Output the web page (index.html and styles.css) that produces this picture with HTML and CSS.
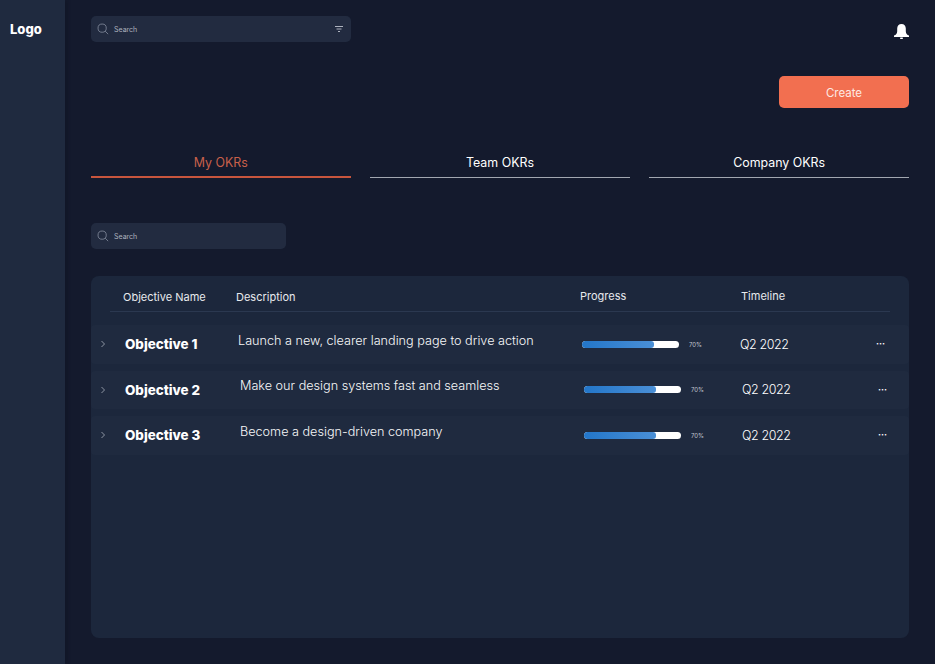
FILE: index.html
```html
<!DOCTYPE html>
<html lang="en">
<head>
    <meta charset="UTF-8">
    <meta name="viewport" content="width=device-width, initial-scale=1.0">
    <title>OKRs</title>
    <link rel="stylesheet" href="styles.css">
</head>
<body>
    <div class="app">
        <aside class="sidebar">
            <div class="logo">Logo</div>
        </aside>

        <main class="main">
            <header class="topbar">
                <div class="search search-wide">
                    <svg class="search-icon" viewBox="0 0 14 14"><circle cx="6" cy="6" r="4.8"/><path d="M9.5 9.5L13 13"/></svg>
                    <span class="search-text">Search</span>
                    <svg class="filter-icon" viewBox="0 0 8 6"><path d="M0 .5h8M1.500 3h5M3 5.500h2"/></svg>
                </div>
                <svg class="bell" viewBox="0 0 15 15"><path d="M7.500 0C4.800 0 3.200 2 3.200 4.600v2.600C3.200 9.300 2 10.700 0 11.600V13h15v-1.400c-2-.9-3.200-2.300-3.200-4.400V4.600C11.800 2 10.200 0 7.500 0z"/><rect x="6" y="13.500" width="3" height="1.500" rx=".7"/></svg>
            </header>

            <div class="actions">
                <button class="create-btn">Create</button>
            </div>

            <nav class="tabs">
                <div class="tab active">My OKRs</div>
                <div class="tab">Team OKRs</div>
                <div class="tab">Company OKRs</div>
            </nav>

            <div class="search search-small">
                <svg class="search-icon" viewBox="0 0 14 14"><circle cx="6" cy="6" r="4.8"/><path d="M9.5 9.5L13 13"/></svg>
                <span class="search-text">Search</span>
            </div>

            <section class="okr-card">
                <div class="okr-head">
                    <div class="head-name">Objective Name</div>
                    <div class="head-desc">Description</div>
                    <div class="head-progress">Progress</div>
                    <div class="head-time">Timeline</div>
                </div>

                <div class="okr-row">
                    <svg class="chevron" viewBox="0 0 6 8"><path d="M1.500 1l3 3-3 3"/></svg>
                    <div class="okr-name">Objective 1</div>
                    <div class="okr-desc">Launch a new, clearer landing page to drive action</div>
                    <div class="okr-progress">
                        <div class="bar"><div class="bar-fill"></div></div>
                        <span class="percent">70%</span>
                    </div>
                    <div class="okr-time">Q2 2022</div>
                    <div class="more">&middot;&middot;&middot;</div>
                </div>

                <div class="okr-row shifted">
                    <svg class="chevron" viewBox="0 0 6 8"><path d="M1.500 1l3 3-3 3"/></svg>
                    <div class="okr-name">Objective 2</div>
                    <div class="okr-desc">Make our design systems fast and seamless</div>
                    <div class="okr-progress">
                        <div class="bar"><div class="bar-fill"></div></div>
                        <span class="percent">70%</span>
                    </div>
                    <div class="okr-time">Q2 2022</div>
                    <div class="more">&middot;&middot;&middot;</div>
                </div>

                <div class="okr-row shifted">
                    <svg class="chevron" viewBox="0 0 6 8"><path d="M1.500 1l3 3-3 3"/></svg>
                    <div class="okr-name">Objective 3</div>
                    <div class="okr-desc">Become a design-driven company</div>
                    <div class="okr-progress">
                        <div class="bar"><div class="bar-fill"></div></div>
                        <span class="percent">70%</span>
                    </div>
                    <div class="okr-time">Q2 2022</div>
                    <div class="more">&middot;&middot;&middot;</div>
                </div>
            </section>
        </main>
    </div>
</body>
</html>
```

FILE: styles.css
```css
:root {
    --bg-dark: #141a2d;
    --panel: #1f2a3f;
    --card: #1c273c;
    --row: #1f2a3f;
    --orange: #f26f50;
    --text-light: #f2f3f5;
}
* {
    box-sizing: border-box;
}
body {
    margin: 0;
    font-family: 'Inter', 'Open Sans', sans-serif;
    background-color: var(--bg-dark);
    color: var(--text-light);
}
.app {
    display: flex;
    height: 664px;
    overflow: hidden;
}
.sidebar {
    width: 65px;
    flex-shrink: 0;
    background-color: var(--panel);
    box-shadow: 3px 0 3px rgba(10, 14, 26, 0.25);
    padding: 20px 0 0 10px;
}
.logo {
    font-size: 13px;
    font-weight: 800;
    line-height: 19px;
    color: #fff;
}
.main {
    flex: 1;
    padding: 16px 26px 26px;
    display: flex;
    flex-direction: column;
}
.topbar {
    display: flex;
    justify-content: space-between;
    align-items: flex-start;
}
.search {
    display: flex;
    align-items: center;
    height: 26px;
    padding: 0 7px 0 6px;
    border-radius: 5px;
    background-color: #222b40;
}
.search-wide {
    width: 260px;
}
.search-small {
    width: 195px;
    margin-top: 45px;
}
.search-icon {
    width: 12px;
    height: 12px;
    fill: none;
    stroke: #7f8899;
    stroke-width: 1;
}
.search-text {
    flex: 1;
    margin-left: 5px;
    font-size: 7px;
    color: #aeb3bf;
}
.filter-icon {
    width: 8px;
    height: 6px;
    margin-right: 1px;
    fill: none;
    stroke: #aeb3bf;
    stroke-width: 1;
}
.bell {
    width: 15px;
    height: 15px;
    margin-top: 8px;
    fill: #fff;
}
.actions {
    display: flex;
    justify-content: flex-end;
    margin-top: 34px;
}
.create-btn {
    width: 130px;
    height: 32px;
    padding-top: 2px;
    border: none;
    border-radius: 5px;
    background-color: var(--orange);
    color: #fde9e3;
    font-family: inherit;
    font-size: 11.500px;
    cursor: pointer;
}
.tabs {
    display: grid;
    grid-template-columns: repeat(3, 1fr);
    gap: 19.500px;
    margin-top: 44px;
}
.tab {
    height: 26px;
    text-align: center;
    font-size: 12.400px;
    font-weight: 400;
    line-height: 21px;
    color: #fff;
    border-bottom: 1px solid #a2a7b0;
}
.tab.active {
    color: #c8604a;
    border-bottom: 2px solid #c8553d;
}
.okr-card {
    flex: 1;
    margin-top: 27px;
    border-radius: 8px;
    background-color: var(--card);
    display: flex;
    flex-direction: column;
    gap: 7px;
}
.okr-head {
    height: 36px;
    margin: 0 19px 6px;
    border-bottom: 1px solid #2b3850;
    font-size: 11px;
    color: #e8eaee;
    display: flex;
    align-items: center;
}
.head-name {
    width: 113px;
    margin-left: 13px;
    padding-top: 6px;
}
.head-desc {
    width: 344px;
    padding-top: 6px;
}
.head-progress {
    width: 161px;
    padding-top: 4px;
}
.head-time {
    padding-top: 4px;
}
.okr-row {
    height: 38.500px;
    display: flex;
    align-items: center;
    background-color: var(--row);
    border-radius: 4px;
}
.chevron {
    width: 6px;
    height: 8px;
    margin-left: 9px;
    fill: none;
    stroke: #8d95a3;
    stroke-width: 1;
}
.okr-name {
    width: 113px;
    margin-left: 19px;
    font-size: 13.400px;
    font-weight: 800;
    color: #fff;
}
.okr-desc {
    width: 344px;
    padding-bottom: 8px;
    font-size: 12.650px;
    font-weight: 300;
    color: #f7f8f9;
}
.okr-progress {
    width: 158px;
    display: flex;
    align-items: center;
}
.bar {
    width: 97px;
    height: 7px;
    border-radius: 4px;
    background-color: #fff;
    overflow: hidden;
}
.bar-fill {
    width: 74%;
    height: 100%;
    border-radius: 0 3px 3px 0;
    background: linear-gradient(90deg, #2376c9, #4a8fd6);
}
.percent {
    margin-left: 10px;
    font-size: 6px;
    color: #c3c7cf;
}
.okr-time {
    width: 136px;
    font-size: 12.500px;
    font-weight: 300;
    letter-spacing: -0.4px;
    color: #fff;
}
.more {
    font-size: 9px;
    font-weight: 700;
    line-height: 12px;
    color: #fff;
}
.shifted .okr-desc,
.shifted .okr-progress,
.shifted .okr-time,
.shifted .more {
    position: relative;
    left: 2px;
}
```
